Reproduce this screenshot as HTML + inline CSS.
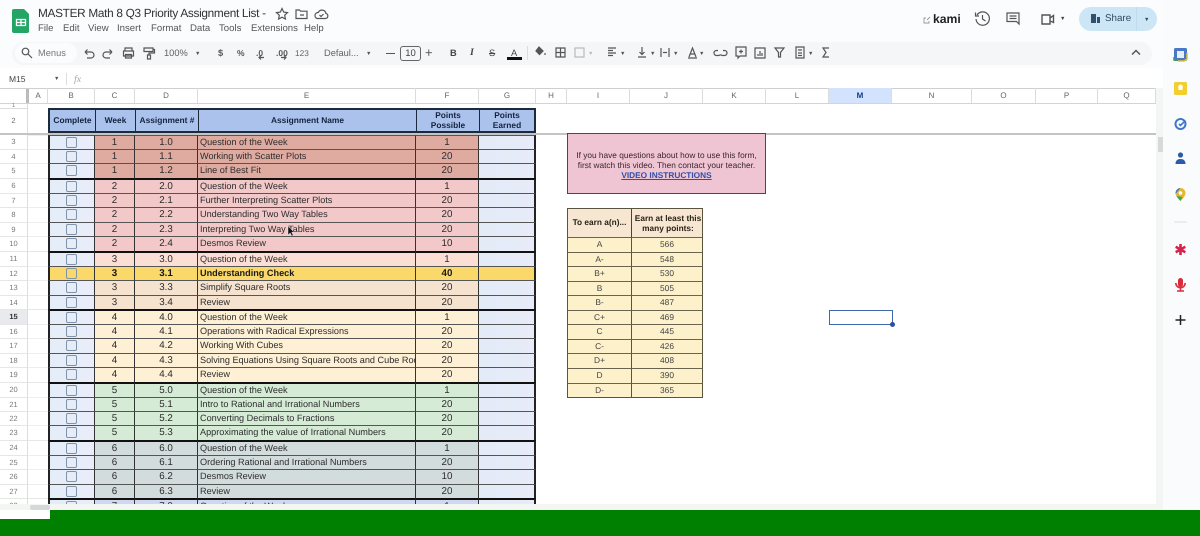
<!DOCTYPE html>
<html><head><meta charset="utf-8"><style>
html,body{margin:0;padding:0;background:#fff}
#p{position:relative;width:1200px;height:536px;overflow:hidden;background:#fff;font-family:"Liberation Sans",sans-serif;color:#222;text-rendering:geometricPrecision;filter:blur(.35px)}
#p *{box-sizing:border-box}
.a{position:absolute;white-space:nowrap}
.m{position:absolute;top:23px;font-size:9.600px;color:#555;line-height:12px}
.t{position:absolute;top:47px;font-size:9.300px;color:#5f6368;line-height:12px}
.c{position:absolute;top:50px;font-size:5.500px;line-height:8px;color:#555}
.i{position:absolute}
.i *{fill:none;stroke:#555;stroke-width:1.2}
.h{position:absolute;top:88px;height:15px;border-right:1px solid #dcdcdc;text-align:center;font-size:8px;line-height:15px;color:#666}
.r{position:absolute;left:0;width:536px;display:grid;grid-template-columns:28px 20px 47px 40px 63px 218px 63px 57px;font-size:9.800px;color:#2c2c2c}
.r>*{display:block;overflow:hidden;white-space:nowrap;text-align:center;line-height:14px;border-top:1px solid #555;font-style:normal;text-decoration:none;font-weight:inherit}
.r>:nth-child(1){font-size:7.500px;color:#777;border-top:1px solid #e6e6e6;background:#fff;border-right:1px solid #ddd}
.r>:nth-child(2){border-top:1px solid #eee;background:#fff}
.r>:nth-child(3){background:linear-gradient(90deg,#e3edf8,#e9edf9);border-left:2px solid #222;border-right:1px solid #333;position:relative}
.r>:nth-child(3)::after{content:"";box-sizing:border-box;position:absolute;left:16px;top:1px;width:11px;height:11px;border:1.300px solid #7f93aa;border-radius:2px}
.r>:nth-child(4),.r>:nth-child(5),.r>:nth-child(7){background:var(--c);border-right:1px solid #333}
.r>:nth-child(6){background:var(--c);border-right:1px solid #333;text-align:left;padding-left:2px;font-size:9.150px;line-height:13px}
.r>:nth-child(8){background:linear-gradient(90deg,#e3ebf7,#e8ebf9);border-right:2px solid #222}
.k>*{border-top:2px solid #111!important;line-height:13px}
.k>:nth-child(6){line-height:12px}
.k>:nth-child(1),.k>:nth-child(2){border-top:1px solid #e6e6e6!important}
.b{font-weight:bold;color:#1a1a1a}
.g{position:absolute;left:567px;width:136px;display:grid;grid-template-columns:64px 72px;font-size:8.400px;color:#444}
.g>*{display:block;text-align:center;background:#fdf1cc;border-top:1px solid #6a6350;border-left:1px solid #5a5340;line-height:13.500px}
.g>:nth-child(2){border-right:1px solid #5a5340}
.s{position:absolute;left:1172px}
</style></head><body><div id="p">

<div class="a" style="left:0;top:0;width:1200px;height:88px;background:#fafcfd"></div>
<div class="a" style="left:0;top:68px;width:1163px;height:20px;background:#fff"></div>
<div class="a" style="left:12px;top:42px;width:1140px;height:23px;border-radius:12px;background:#f4f6f8"></div>
<div class="a" style="left:15px;top:43px;width:62px;height:20px;border-radius:10px;background:#fbfcfd"></div>

<svg class="i" style="left:12px;top:9px" width="18" height="24" viewBox="0 0 18 24"><path style="fill:#23a566;stroke:none" d="M2 0h10l5 5v17a2 2 0 0 1-2 2H2a2 2 0 0 1-2-2V2a2 2 0 0 1 2-2z"/><path style="fill:none;stroke:#fff;stroke-width:1.300" d="M4.500 10.500h9v6h-9zM4.500 13.500h9M9 10.500v6"/></svg>
<div class="a" style="left:38px;top:5px;font-size:11.800px;letter-spacing:-.3px;line-height:17px;color:#333">MASTER Math 8 Q3 Priority Assignment List -</div>
<svg class="i" style="left:275px;top:7px" width="60" height="14" viewBox="0 0 60 14"><path d="M7 1.500l1.700 3.600 3.800.5-2.800 2.600.7 3.800L7 10.200 3.600 12l.7-3.800L1.500 5.600l3.800-.5z"/><path d="M21 3h3.500l1 1.200H32v7.300H21zM25 8h4"/><path d="M42 11.500h8.500a2.600 2.600 0 0 0 .4-5.100 4 4 0 0 0-7.600-.9A3.100 3.100 0 0 0 42 11.500zM44.500 8l1.500 1.500L48.500 7"/></svg>
<span class="m" style="left:38px">File</span><span class="m" style="left:63px">Edit</span><span class="m" style="left:88px">View</span><span class="m" style="left:117px">Insert</span><span class="m" style="left:151px">Format</span><span class="m" style="left:190px">Data</span><span class="m" style="left:219px">Tools</span><span class="m" style="left:251px">Extensions</span><span class="m" style="left:304px">Help</span>

<svg class="i" style="left:21px;top:47px" width="12" height="12" viewBox="0 0 12 12"><circle cx="4.500" cy="4.500" r="3.300"/><path d="M7 7l4 4"/></svg>
<span class="t" style="left:38px;color:#777">Menus</span>
<svg class="i" style="left:82px;top:46px" width="80" height="14" viewBox="0 0 80 14"><path d="M3 6h6a3 3 0 0 1 0 6H5M3 6l2.500-2.500M3 6l2.500 2.500"/><path d="M30 6h-6a3 3 0 0 0 0 6h4M30 6l-2.500-2.500M30 6l-2.500 2.500"/><path d="M43 5V2h7v3M41.500 5h10v5h-10zM43.500 8.500h6v3.500h-6z"/><path d="M62 2h9v3.500h-9zM71 3.500h1.500v3.500H67v2M65.500 9h3v4h-3z"/></svg>
<span class="t" style="left:164px">100%</span>
<span class="c" style="left:195px">▼</span>
<span class="t b" style="left:218px;color:#555">$</span><span class="t b" style="left:237px;font-size:8.500px;color:#555">%</span><span class="t b" style="left:256px;font-size:8.500px;color:#555">.0</span><span class="t b" style="left:276px;font-size:8.500px;color:#555">.00</span><span class="t" style="left:295px;font-size:8.300px">123</span>
<svg class="i" style="left:255px;top:54px" width="36" height="7" viewBox="0 0 36 7"><path d="M9 3.500H4M6 1.500l-2 2 2 2"/><path d="M26 3.500h5M29 1.500l2 2-2 2"/></svg>
<span class="t" style="left:324px">Defaul...</span><span class="c" style="left:366px">▼</span>
<span class="a" style="left:386px;top:52.500px;width:9px;height:1.300px;background:#555"></span>
<div class="a" style="left:400px;top:46px;width:21px;height:15px;border:1px solid #666;border-radius:3px;text-align:center;font-size:9.500px;line-height:13px;color:#444">10</div>
<span class="a" style="left:425px;top:45px;font-size:13px;line-height:16px;color:#555">+</span>
<span class="t b" style="left:450px;color:#444">B</span><span class="t" style="left:470px;font-family:'Liberation Serif',serif;font-style:italic;font-weight:bold;font-size:10px;color:#444">I</span><span class="t" style="left:489px;color:#444;text-decoration:line-through">S</span>
<span class="t" style="left:511px;color:#444">A</span><span class="a" style="left:507px;top:57px;width:15px;height:3px;background:#111"></span>
<div class="a" style="left:527px;top:46px;width:1px;height:14px;background:#ddd"></div>
<svg class="i" style="left:533px;top:45px" width="300" height="16" viewBox="0 0 300 16"><path d="M6 2l4 4-3.500 3.500L3 6zM12 8v2" style="fill:#555;stroke:#555"/><path d="M23 3h9v9h-9zM27.500 3v9M23 7.500h9"/><path d="M42 3h9v9h-9z" style="stroke:#bbb"/><path d="M75 3h8M75 5.500h5M75 8h8M75 10.500h5"/><path d="M109 2v7M106.500 7l2.500 2.500 2.500-2.500M105 12h8"/><path d="M128 3v9M136 3v9M130 7.500h4"/><path d="M156 12l3.500-9 3.500 9M157 9h5M155 13h9"/><path d="M185 5.500h-1.500a2.500 2.500 0 0 0 0 5h2a2.500 2.500 0 0 0 2-1M190 5.500h1.500a2.500 2.500 0 0 1 0 5h-2a2.500 2.500 0 0 1-2-1"/><path d="M203 2h10v9h-6l-2 2v-2h-2zM208 4.500v4M206 6.500h4"/><path d="M222 3h10v10h-10zM225 9v2M227 6v5M229 8v3"/><path d="M242 3h9l-3.500 4.500V12h-2V7.500z"/><path d="M263 2h8v11h-8zM265 5h4M265 8h4M265 10.500h4"/><path d="M296 3h-6l3 4.500-3 4.500h6"/></svg>
<span class="c" style="left:588px;color:#bbb">▼</span>
<span class="c" style="left:620px">▼</span>
<span class="c" style="left:650px">▼</span>
<span class="c" style="left:673px">▼</span>
<span class="c" style="left:699px">▼</span>
<span class="c" style="left:808px">▼</span>
<svg class="i" style="left:1131px;top:49px" width="10" height="7" viewBox="0 0 10 7"><path d="M1 5.500L5 1.500l4 4" style="stroke-width:1.500"/></svg>

<svg class="i" style="left:923px;top:16px" width="8" height="8" viewBox="0 0 8 8"><path d="M6 5v2H1V2h2M4 4l3-3" style="stroke:#999;stroke-width:.9"/></svg>
<div class="a" style="left:933px;top:11px;font-size:12.200px;line-height:16px;font-weight:bold;color:#222">kami</div>
<svg class="i" style="left:974px;top:10px" width="100" height="18" viewBox="0 0 100 18"><path d="M3 5a6.700 6.700 0 1 1-1 4M1.500 2.500V6H5M8.500 5v4l3 2"/><path d="M33 3h12v11l-2.500-2.500H33zM35.500 6h7M35.500 8.500h7"/><path d="M68 5h8v9h-8zM76 8l3.500-2.500v7L76 11" style="stroke-width:1.400"/></svg>
<span class="a" style="left:1060px;top:15px;font-size:5.500px;line-height:8px;color:#444">▼</span>
<div class="a" style="left:1079px;top:7px;width:78px;height:24px;border-radius:12px;background:#cde6f5"></div>
<div class="a" style="left:1136px;top:7px;width:1px;height:24px;background:#bfdcee"></div>
<svg class="i" style="left:1090px;top:13px" width="11" height="11" viewBox="0 0 11 11"><path style="fill:#31506b;stroke:none" d="M1 1h5v9H1zM7 4h3v6H7z"/></svg>
<div class="a" style="left:1105px;top:12px;font-size:9.800px;line-height:14px;color:#2f4b63">Share</div>
<span class="a" style="left:1144px;top:16px;font-size:5.500px;line-height:8px;color:#2f4b63">▼</span>
<svg class="i" style="left:1166px;top:8px" width="21" height="21" viewBox="0 0 21 21"><circle cx="10.500" cy="10.500" r="10.500" style="fill:#9c7f78;stroke:none"/><path style="fill:#5c3b35;stroke:none" d="M3 16c-1-7 1-13 7.500-13S19 9 18 16l-3 2V9c-3 0-7 0-9 0v9z"/><ellipse cx="10.500" cy="11" rx="4" ry="5" style="fill:#e0b9a8;stroke:none"/><path style="fill:#6a5a60;stroke:none" d="M4 21c1-4 4-5 6.500-5s5.500 1 6.500 5z"/></svg>

<div class="a" style="left:9px;top:73px;font-size:8.500px;line-height:12px;color:#444">M15</div>
<span class="a" style="left:54px;top:75px;font-size:5.500px;line-height:8px;color:#555">▼</span>
<div class="a" style="left:66px;top:73px;width:1px;height:12px;background:#ddd"></div>
<div class="a" style="left:74px;top:73px;font-family:'Liberation Serif',serif;font-style:italic;font-size:10px;line-height:13px;color:#aaa">fx</div>

<div class="a" style="left:0;top:88px;width:1156px;height:1px;background:#cfcfcf"></div>
<div class="a" style="left:0;top:103px;width:1156px;height:1px;background:#d4d4d4"></div>
<div class="a" style="left:0;top:89px;width:29px;height:14px;border-right:3px solid #bbb"></div>
<div class="h" style="left:29px;width:19px">A</div><div class="h" style="left:48px;width:47px">B</div><div class="h" style="left:95px;width:40px">C</div><div class="h" style="left:135px;width:63px">D</div><div class="h" style="left:198px;width:218px">E</div><div class="h" style="left:416px;width:63px">F</div><div class="h" style="left:479px;width:57px">G</div><div class="h" style="left:536px;width:31px">H</div><div class="h" style="left:567px;width:63px">I</div><div class="h" style="left:630px;width:73px">J</div><div class="h" style="left:703px;width:63px">K</div><div class="h" style="left:766px;width:63px">L</div><div class="h" style="left:829px;width:63px;background:#d3e3fd;color:#0b3a8a;font-weight:bold">M</div><div class="h" style="left:892px;width:80px">N</div><div class="h" style="left:972px;width:64px">O</div><div class="h" style="left:1036px;width:62px">P</div><div class="h" style="left:1098px;width:58px">Q</div>

<div class="a" style="left:0;top:104px;width:28px;height:5px;font-size:6px;line-height:5px;text-align:center;color:#888;border-right:1px solid #ddd;border-bottom:1px solid #ddd">1</div>
<div class="a" style="left:0;top:109px;width:28px;height:24px;font-size:7.500px;line-height:24px;text-align:center;color:#666;border-right:1px solid #ddd">2</div>

<div class="a" style="left:48px;top:108px;width:488px;height:25px;border:2px solid #1d2a3a;background:#abc3ec;display:grid;grid-template-columns:46px 40px 63px 218px 63px 54px;font-size:8.400px;font-weight:bold;color:#14233f;text-align:center;line-height:21px">
<span style="border-right:1px solid #1d2a3a">Complete</span><span style="border-right:1px solid #1d2a3a">Week</span><span style="border-right:1px solid #1d2a3a">Assignment #</span><span style="border-right:1px solid #1d2a3a">Assignment Name</span><span style="border-right:1px solid #1d2a3a;line-height:10px">Points<br>Possible</span><span style="line-height:10px">Points<br>Earned</span></div>

<div class="r" style="top:135px;height:15px;--c:#dfaaa0"><i style="border-top:0">3</i><u></u><b></b><span>1</span><span>1.0</span><span>Question of the Week</span><span>1</span><em></em></div>
<div class="r" style="top:149px;height:15px;--c:#dfaaa0"><i>4</i><u></u><b></b><span>1</span><span>1.1</span><span>Working with Scatter Plots</span><span>20</span><em></em></div>
<div class="r" style="top:163px;height:16px;--c:#dfaaa0"><i>5</i><u></u><b></b><span>1</span><span>1.2</span><span>Line of Best Fit</span><span>20</span><em></em></div>
<div class="r k" style="top:178px;height:16px;--c:#f2c8c8"><i>6</i><u></u><b></b><span>2</span><span>2.0</span><span>Question of the Week</span><span>1</span><em></em></div>
<div class="r" style="top:193px;height:15px;--c:#f2c8c8"><i>7</i><u></u><b></b><span>2</span><span>2.1</span><span>Further Interpreting Scatter Plots</span><span>20</span><em></em></div>
<div class="r" style="top:207px;height:16px;--c:#f2c8c8"><i>8</i><u></u><b></b><span>2</span><span>2.2</span><span>Understanding Two Way Tables</span><span>20</span><em></em></div>
<div class="r" style="top:222px;height:15px;--c:#f2c8c8"><i>9</i><u></u><b></b><span>2</span><span>2.3</span><span>Interpreting Two Way Tables</span><span>20</span><em></em></div>
<div class="r" style="top:236px;height:16px;--c:#f2c8c8"><i>10</i><u></u><b></b><span>2</span><span>2.4</span><span>Desmos Review</span><span>10</span><em></em></div>
<div class="r k" style="top:251px;height:16px;--c:#fbdfd5"><i>11</i><u></u><b></b><span>3</span><span>3.0</span><span>Question of the Week</span><span>1</span><em></em></div>
<div class="r" style="top:266px;height:15px;--c:#fad869;font-weight:bold;color:#1a1a1a"><i style="font-weight:normal">12</i><u></u><b style="background:#fad869"></b><span>3</span><span>3.1</span><span>Understanding Check</span><span>40</span><em style="background:#fad869"></em></div>
<div class="r" style="top:280px;height:16px;--c:#f5e3d0"><i>13</i><u></u><b></b><span>3</span><span>3.3</span><span>Simplify Square Roots</span><span>20</span><em></em></div>
<div class="r" style="top:295px;height:15px;--c:#f5e3d0"><i>14</i><u></u><b></b><span>3</span><span>3.4</span><span>Review</span><span>20</span><em></em></div>
<div class="r k" style="top:309px;height:16px;--c:#fef0d5"><i style="background:#e8eaed;font-weight:bold;color:#333">15</i><u></u><b></b><span>4</span><span>4.0</span><span>Question of the Week</span><span>1</span><em></em></div>
<div class="r" style="top:324px;height:15px;--c:#fef0d5"><i>16</i><u></u><b></b><span>4</span><span>4.1</span><span>Operations with Radical Expressions</span><span>20</span><em></em></div>
<div class="r" style="top:338px;height:16px;--c:#fef0d5"><i>17</i><u></u><b></b><span>4</span><span>4.2</span><span>Working With Cubes</span><span>20</span><em></em></div>
<div class="r" style="top:353px;height:15px;--c:#fef0d5"><i>18</i><u></u><b></b><span>4</span><span>4.3</span><span>Solving Equations Using Square Roots and Cube Roots</span><span>20</span><em></em></div>
<div class="r" style="top:367px;height:16px;--c:#fef0d5"><i>19</i><u></u><b></b><span>4</span><span>4.4</span><span>Review</span><span>20</span><em></em></div>
<div class="r k" style="top:382px;height:16px;--c:#d5ebd6"><i>20</i><u></u><b></b><span>5</span><span>5.0</span><span>Question of the Week</span><span>1</span><em></em></div>
<div class="r" style="top:397px;height:15px;--c:#d5ebd6"><i>21</i><u></u><b></b><span>5</span><span>5.1</span><span>Intro to Rational and Irrational Numbers</span><span>20</span><em></em></div>
<div class="r" style="top:411px;height:15px;--c:#d5ebd6"><i>22</i><u></u><b></b><span>5</span><span>5.2</span><span>Converting Decimals to Fractions</span><span>20</span><em></em></div>
<div class="r" style="top:425px;height:16px;--c:#d5ebd6"><i>23</i><u></u><b></b><span>5</span><span>5.3</span><span>Approximating the value of Irrational Numbers</span><span>20</span><em></em></div>
<div class="r k" style="top:440px;height:16px;--c:#d3dcdc"><i>24</i><u></u><b></b><span>6</span><span>6.0</span><span>Question of the Week</span><span>1</span><em></em></div>
<div class="r" style="top:455px;height:15px;--c:#d3dcdc"><i>25</i><u></u><b></b><span>6</span><span>6.1</span><span>Ordering Rational and Irrational Numbers</span><span>20</span><em></em></div>
<div class="r" style="top:469px;height:16px;--c:#d3dcdc"><i>26</i><u></u><b></b><span>6</span><span>6.2</span><span>Desmos Review</span><span>10</span><em></em></div>
<div class="r" style="top:484px;height:15px;--c:#d3dcdc"><i>27</i><u></u><b></b><span>6</span><span>6.3</span><span>Review</span><span>20</span><em></em></div>
<div class="r k" style="top:498px;height:16px;--c:#cfd8ef"><i>28</i><u></u><b></b><span>7</span><span>7.0</span><span>Question of the Week</span><span>1</span><em></em></div>

<div class="a" style="left:0;top:133px;width:1160px;height:2px;background:#c4c4c4"></div>

<svg class="i" style="left:287px;top:226px" width="8" height="11" viewBox="0 0 8 11"><path style="fill:#111;stroke:#fff;stroke-width:.4" d="M1 0v9l2.200-2 1.500 3 1.500-.7-1.500-3H7z"/></svg>

<div class="a" style="left:567px;top:133px;width:199px;height:61px;background:#efc5d3;border:1px solid #4f464c;text-align:center;font-size:8.300px;line-height:9.800px;color:#3b2530;padding-top:17px">If you have questions about how to use this form,<br>first watch this video. Then contact your teacher.<br><span style="color:#2f4fa8;font-weight:bold;text-decoration:underline">VIDEO INSTRUCTIONS</span></div>

<div class="a" style="left:567px;top:208px;width:136px;height:30px;display:grid;grid-template-columns:64px 72px;font-size:8.300px;font-weight:bold;color:#2a2418;text-align:center;background:#f7e6d2;border:1px solid #5a5340;line-height:10px"><span style="border-right:1px solid #4a4330;line-height:27px">To earn a(n)...</span><span style="padding-top:4px">Earn at least this<br>many points:</span></div>
<div class="g" style="top:237px;height:15px"><span>A</span><span>566</span></div>
<div class="g" style="top:252px;height:15px"><span>A-</span><span>548</span></div>
<div class="g" style="top:266px;height:15px"><span>B+</span><span>530</span></div>
<div class="g" style="top:281px;height:15px"><span>B</span><span>505</span></div>
<div class="g" style="top:295px;height:15px"><span>B-</span><span>487</span></div>
<div class="g" style="top:310px;height:15px"><span>C+</span><span>469</span></div>
<div class="g" style="top:324px;height:15px"><span>C</span><span>445</span></div>
<div class="g" style="top:339px;height:15px"><span>C-</span><span>426</span></div>
<div class="g" style="top:353px;height:15px"><span>D+</span><span>408</span></div>
<div class="g" style="top:368px;height:15px"><span>D</span><span>390</span></div>
<div class="g" style="top:383px;height:15px"><span>D-</span><span>365</span></div>
<div class="a" style="left:567px;top:397px;width:136px;height:1px;background:#5a5340"></div>

<div class="a" style="left:829px;top:310px;width:64px;height:15px;border:1.500px solid #3d68ad"></div>
<div class="a" style="left:890px;top:322px;width:5px;height:5px;border-radius:50%;background:#2d4f9e"></div>

<div class="a" style="left:1156px;top:88px;width:7px;height:422px;background:#f4f5f5"></div>
<div class="a" style="left:1158px;top:137px;width:6px;height:15px;background:#d8d8d8"></div>
<div class="a" style="left:1163px;top:0;width:37px;height:536px;background:#f9fbfc"></div>
<svg class="s" style="top:45px" width="18" height="285" viewBox="0 0 18 285"><rect x="2" y="3" width="13" height="13" rx="1.500" fill="#4a78c8"/><rect x="5" y="6" width="7" height="7" fill="#e7eefb"/><path d="M15 8v6l-3 2H6" stroke="#e4bf2d" stroke-width="1.500" fill="none"/><path d="M2 12v3h4" stroke="#3b9a5a" stroke-width="1.500" fill="none"/><rect x="2" y="37" width="13" height="13" rx="1.500" fill="#f2cf2e"/><path d="M6.500 43a2.300 2.300 0 1 1 4 0v2h-4z" fill="#fff"/><circle cx="8.500" cy="79" r="5" fill="none" stroke="#3f78c9" stroke-width="2"/><path d="M7 79l1.500 1.500 5-5" stroke="#3f78c9" stroke-width="1.600" fill="none"/><circle cx="8.500" cy="110" r="2.600" fill="#2a5aa8"/><path d="M3.500 119c0-3.500 2-5 5-5s5 1.500 5 5z" fill="#2a5aa8"/><path d="M8.500 143a5 5 0 0 1 5 5c0 3.500-5 8-5 8s-5-4.500-5-8a5 5 0 0 1 5-5z" fill="#e8b52e"/><path d="M3.500 148a5 5 0 0 1 5-5l-5 6z" fill="#3d7bd8"/><path d="M8.500 156s-3-3-4-5l6 1z" fill="#3ba55d"/><circle cx="8.500" cy="148" r="1.800" fill="#fff"/><rect x="2" y="176.500" width="13" height="1" fill="#dde1e4"/><path d="M8.500 199v11M3.700 201.800l9.600 5.500M13.300 201.800l-9.600 5.500" stroke="#d6234a" stroke-width="2.600"/><rect x="6" y="233" width="5" height="9" rx="2.500" fill="#d92b3a"/><path d="M3.800 238a4.700 4.700 0 0 0 9.400 0M8.500 243v2.500M5 246h7" stroke="#d92b3a" stroke-width="1.600" fill="none"/><path d="M8.500 270v10M3.500 275h10" stroke="#222" stroke-width="1.500"/></svg>

<div class="a" style="left:0;top:504px;width:1163px;height:6px;background:#f3f6f3"></div>
<div class="a" style="left:30px;top:505px;width:20px;height:5px;background:#d5d8d8;border-radius:2px"></div>
<div class="a" style="left:0;top:510px;width:1200px;height:26px;background:#008000"></div>
<div class="a" style="left:0;top:510px;width:50px;height:9px;background:#fff"></div>

</div></body></html>
